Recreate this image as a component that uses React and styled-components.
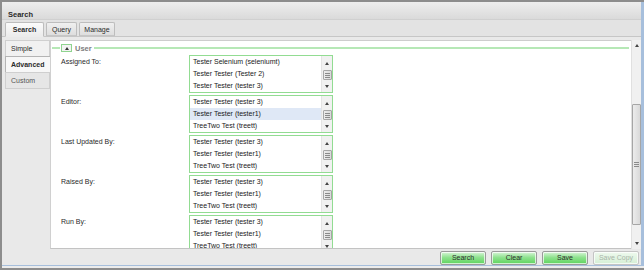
import React from 'react';
import styled, { createGlobalStyle } from 'styled-components';

const GlobalStyle = createGlobalStyle`
  html, body {
    margin: 0;
    padding: 0;
    background: #ffffff;
  }
  body {
    font-family: "Liberation Sans", Arial, sans-serif;
    font-size: 7px;
    color: #1a1a1a;
  }
  * { box-sizing: border-box; }
`;

const Frame = styled.div`
  width: 644px;
  height: 270px;
  border: 2px solid #8d8d8d;
  border-right: none;
  background: #ececec;
  overflow: hidden;
`;

const Window = styled.div`
  display: flex;
  flex-direction: column;
  height: 264px;
  border-right: 3px solid #a7bfdc;
  border-bottom: 1px solid #a7bfdc;
  background: #e9e9e9;
`;

const TitleBar = styled.div`
  flex-shrink: 0;
  height: 18px;
  display: flex;
  align-items: flex-end;
  padding: 0 0 0 6px;
  line-height: 9px;
  font-weight: bold;
  font-size: 7.5px;
  color: #2a2a2a;
  background: linear-gradient(#eeeeee, #dadada);
  border-bottom: 1px solid #d0d0d0;
`;

const TabStrip = styled.div`
  flex-shrink: 0;
  height: 17px;
  display: flex;
  align-items: flex-end;
  gap: 2px;
  padding-left: 3px;
  background: #e3e3e3;
  border-bottom: 1px solid #c6c6c6;
`;

const Tab = styled.div`
  width: ${({ w }) => w}px;
  height: ${({ active }) => (active ? 15 : 14)}px;
  margin-bottom: ${({ active }) => (active ? -1 : 0)}px;
  display: flex;
  align-items: center;
  justify-content: center;
  font-weight: ${({ active }) => (active ? 'bold' : 'normal')};
  color: #2c2c2c;
  background: ${({ active }) =>
    active ? 'linear-gradient(#fbfbfb, #ececec)' : 'linear-gradient(#f0f0f0, #dedede)'};
  border: 1px solid #bdbdbd;
  border-bottom: ${({ active }) => (active ? '1px solid #ececec' : '1px solid #c6c6c6')};
  border-radius: 2px 2px 0 0;
`;

const Body = styled.div`
  flex: 1;
  min-height: 0;
  display: flex;
  flex-direction: column;
  padding: 3px 0 0 3px;
`;

const Main = styled.div`
  flex: 1;
  display: flex;
  min-height: 0;
`;

const SideNav = styled.div`
  width: 45px;
  display: flex;
  flex-direction: column;
`;

const NavItem = styled.div`
  height: 17px;
  display: flex;
  align-items: center;
  padding-left: 5px;
  font-weight: ${({ active }) => (active ? 'bold' : 'normal')};
  color: ${({ muted }) => (muted ? '#555' : '#2a2a2a')};
  background: ${({ active, muted }) =>
    active ? '#f7f7f7' : muted ? '#e6e6e6' : '#f1f1f1'};
  border: 1px solid ${({ active }) => (active ? '#b4b4b4' : '#cfcfcf')};
  border-right: ${({ active }) => (active ? 'none' : '1px solid #cfcfcf')};
  margin-top: -1px;
  &:first-child { margin-top: 0; }
`;

const ContentPane = styled.div`
  flex: 1;
  display: flex;
  min-width: 0;
`;

const Scroller = styled.div`
  flex: 1;
  overflow: hidden;
  background: #fff;
  border-top: 1px solid #cdcdcd;
  border-left: 1px solid #d0d0d0;
  border-bottom: 1px solid #c3c3c3;
`;

const FieldHeader = styled.div`
  height: 14px;
  display: flex;
  align-items: center;
  margin: 0 2px 0 1px;
`;

const GreenLine = styled.div`
  height: 2px;
  background: #b6e8b6;
  width: ${({ w }) => (w ? `${w}px` : 'auto')};
  flex: ${({ w }) => (w ? 'none' : '1')};
`;

const CollapseBox = styled.div`
  width: 11px;
  height: 8px;
  margin-left: 1px;
  display: flex;
  align-items: center;
  justify-content: center;
  background: #f3f3f3;
  border: 1px solid #8fd48f;
  &::after {
    content: '';
    border-left: 2.5px solid transparent;
    border-right: 2.5px solid transparent;
    border-bottom: 3px solid #333;
  }
`;

const LegendText = styled.span`
  margin: 0 2px 0 3px;
  font-weight: bold;
  font-size: 7.5px;
  color: #7c7c7c;
`;

const Rows = styled.div`
  padding-left: 10px;
`;

const Row = styled.div`
  display: grid;
  grid-template-columns: 128px 144px;
  height: 38px;
  margin-bottom: 2px;
`;

const Label = styled.div`
  line-height: 12px;
  padding-top: 1px;
  color: #2a2a2a;
`;

const ListBox = styled.div`
  height: 38px;
  display: flex;
  border: 1px solid #92dc92;
  background: #fff;
`;

const Items = styled.div`
  flex: 1;
`;

const Item = styled.div`
  height: 12px;
  line-height: 12px;
  padding-left: 3px;
  white-space: nowrap;
  overflow: hidden;
  color: #1a1a1a;
  background: ${({ selected }) => (selected ? '#dfe8f6' : 'transparent')};
`;

const ListScroll = styled.div`
  width: 11px;
  display: flex;
  flex-direction: column;
  align-items: center;
  background: #f1f1f1;
  border-left: 1px solid #e4e4e4;
`;

const Arrow = styled.div`
  height: ${({ h }) => h}px;
  flex-shrink: 0;
  display: flex;
  align-items: center;
  justify-content: center;
  &::after {
    content: '';
    border-left: 2.5px solid transparent;
    border-right: 2.5px solid transparent;
    ${({ down }) => (down ? 'border-top: 3px solid #444;' : 'border-bottom: 3px solid #444;')}
  }
`;

const Thumb = styled.div`
  width: ${({ w }) => w}px;
  height: ${({ h }) => h}px;
  flex-shrink: 0;
  margin-top: ${({ top }) => top || 0}px;
  display: flex;
  align-items: center;
  justify-content: center;
  background: linear-gradient(90deg, #ececec, #d9d9d9);
  border: 1px solid #a6a6a6;
  border-radius: 1px;
`;

const Grip = styled.div`
  width: 5px;
  height: 5px;
  background: repeating-linear-gradient(#8a8a8a 0 1px, transparent 1px 2px);
`;

const Fill = styled.div`
  flex: 1;
`;

const MainScroll = styled.div`
  width: 10px;
  display: flex;
  flex-direction: column;
  align-items: center;
  background: #f0f0f0;
  border-left: 1px solid #e0e0e0;
`;

const Footer = styled.div`
  flex-shrink: 0;
  height: 16px;
  display: flex;
  align-items: center;
  justify-content: flex-end;
  gap: 5px;
  padding: 1px 2px 0 0;
`;

const Button = styled.div`
  width: 46px;
  height: 14px;
  display: flex;
  align-items: center;
  justify-content: center;
  color: ${({ disabled }) => (disabled ? '#a9b4a9' : '#2d2d2d')};
  background: ${({ disabled }) =>
    disabled
      ? 'linear-gradient(#eef9ee, #d5efd5)'
      : 'linear-gradient(#d9f6d9, #8fe28f 45%, #5dd45d)'};
  border: 1px solid ${({ disabled }) => (disabled ? '#c4c4c4' : '#9a9a9a')};
  border-radius: 2px;
  box-shadow: inset 0 0 0 1px rgba(255, 255, 255, 0.7);
`;

const people = ['Tester Tester (tester 3)', 'Tester Tester (tester1)', 'TreeTwo Test (treett)'];

const fields = [
  {
    label: 'Assigned To:',
    items: ['Tester Selenium (seleniumt)', 'Tester Tester (Tester 2)', 'Tester Tester (tester 3)'],
  },
  { label: 'Editor:', items: people, selected: 1 },
  { label: 'Last Updated By:', items: people },
  { label: 'Raised By:', items: people },
  { label: 'Run By:', items: people },
];

const UserList = ({ items, selected }) => (
  <ListBox>
    <Items>
      {items.map((name, i) => (
        <Item key={name} selected={i === selected}>
          {name}
        </Item>
      ))}
    </Items>
    <ListScroll>
      <Arrow h={14} />
      <Thumb w={9} h={10}>
        <Grip />
      </Thumb>
      <Fill />
      <Arrow h={12} down />
    </ListScroll>
  </ListBox>
);

export default function App() {
  return (
    <>
      <GlobalStyle />
      <Frame>
        <Window>
          <TitleBar>Search</TitleBar>
          <TabStrip>
            <Tab active w={39}>Search</Tab>
            <Tab w={31}>Query</Tab>
            <Tab w={36}>Manage</Tab>
          </TabStrip>
          <Body>
            <Main>
              <SideNav>
                <NavItem>Simple</NavItem>
                <NavItem active>Advanced</NavItem>
                <NavItem muted>Custom</NavItem>
              </SideNav>
              <ContentPane>
                <Scroller>
                  <FieldHeader>
                    <GreenLine w={8} />
                    <CollapseBox />
                    <LegendText>User</LegendText>
                    <GreenLine />
                  </FieldHeader>
                  <Rows>
                    {fields.map((f) => (
                      <Row key={f.label}>
                        <Label>{f.label}</Label>
                        <UserList items={f.items} selected={f.selected} />
                      </Row>
                    ))}
                  </Rows>
                </Scroller>
                <MainScroll>
                  <Arrow h={11} />
                  <Thumb w={9} h={121} top={53}>
                    <Grip />
                  </Thumb>
                  <Fill />
                  <Arrow h={12} down />
                </MainScroll>
              </ContentPane>
            </Main>
            <Footer>
              <Button>Search</Button>
              <Button>Clear</Button>
              <Button>Save</Button>
              <Button disabled>Save Copy</Button>
            </Footer>
          </Body>
        </Window>
      </Frame>
    </>
  );
}
